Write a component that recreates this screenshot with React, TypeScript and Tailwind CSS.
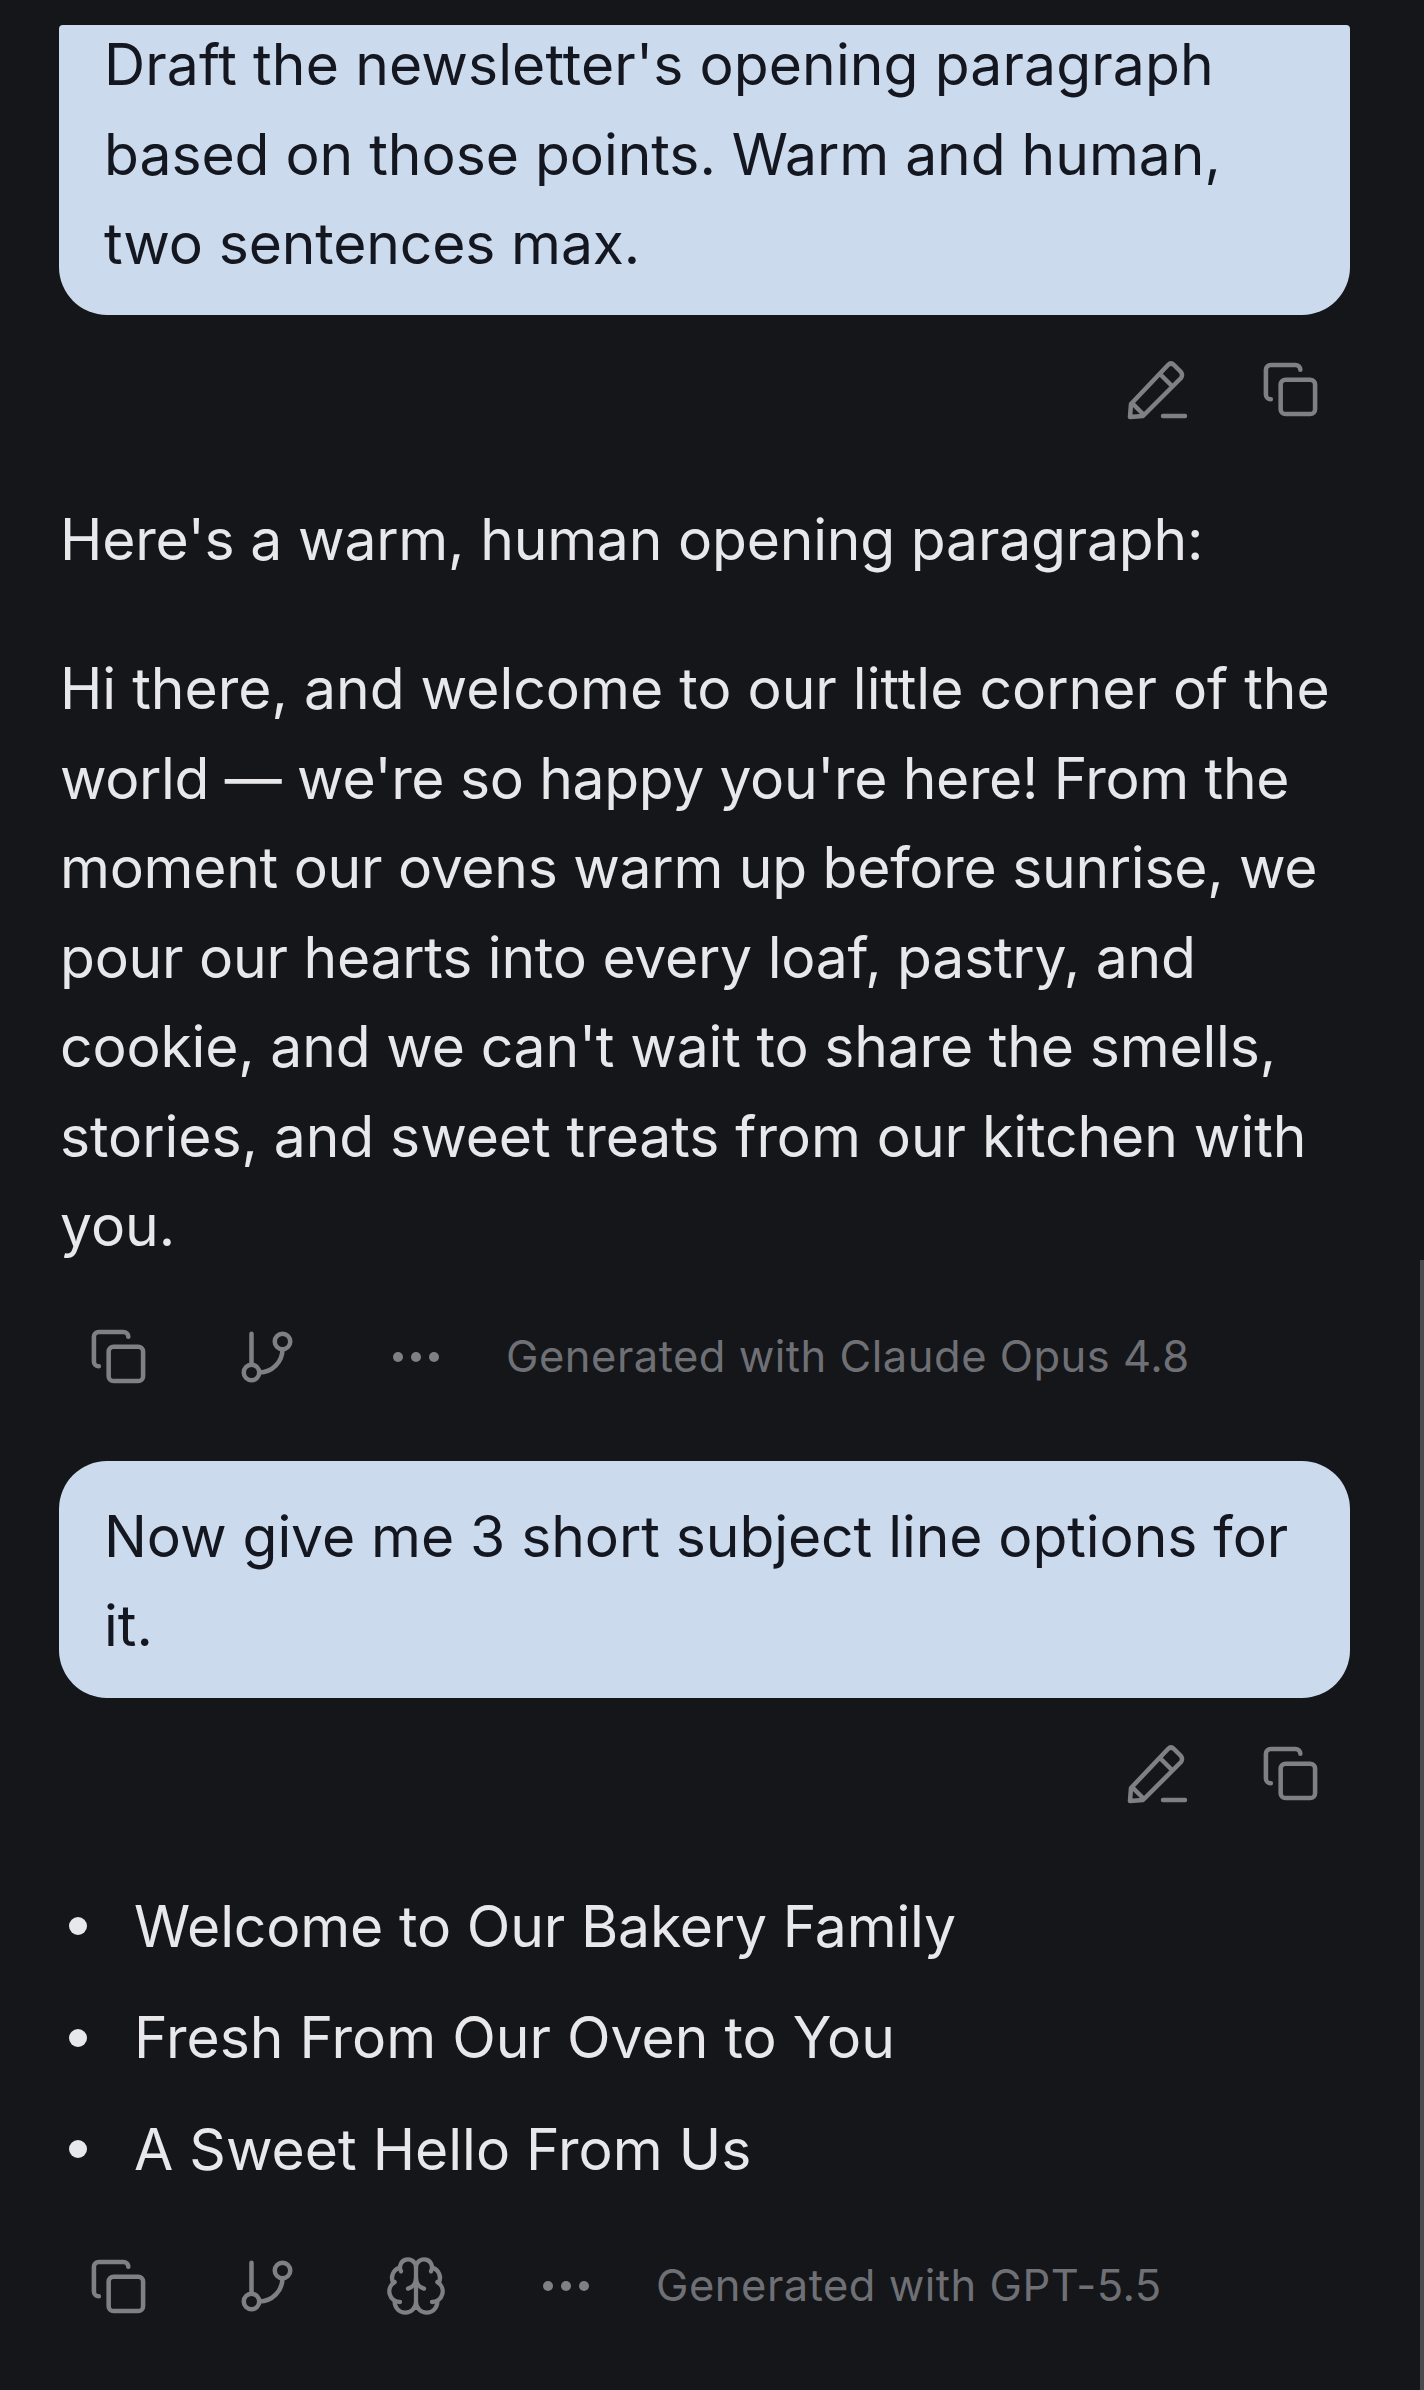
import { Brain, Copy, GitBranch } from "lucide-react";

type Line = { text: string; fit?: string };

function EditIcon() {
  return (
    <svg width="62" height="60" viewBox="0 0 62 60" fill="none" stroke="#7f8084" strokeWidth="4.5" strokeLinejoin="round" strokeLinecap="round">
      <path d="M3 57 L4 44 L41 5 Q44 2 47 5 L54 12 Q56 15 54 18 L16 56 Z" />
      <path d="M6 44 L16 54" />
      <path d="M33 14 L45 26" />
      <path d="M36 56 H58" />
    </svg>
  );
}

function CopyIcon() {
  return <Copy className="w-[59px] h-[59px] text-[#7f8084]" strokeWidth={1.85} />;
}

function TextLines({ lines }: { lines: Line[] }) {
  return (
    <>
      {lines.map((line) => (
        <div key={line.text} className={`h-[89.5px] leading-[89.5px] whitespace-nowrap ${line.fit ?? ""}`}>{line.text}</div>
      ))}
    </>
  );
}

function UserBubble({ lines, flat }: { lines: Line[]; flat?: boolean }) {
  return (
    <div className={flat ? "rounded-b-[48px] rounded-t-[4px] bg-[#cbdaed] px-[45px] pt-[1px] pb-[26px] text-[#14171f]" : "rounded-[48px] bg-[#cbdaed] px-[45px] pt-[31px] pb-[27px] text-[#14171f]"}>
      <div className={flat ? "-mt-[6px]" : ""}>
        <TextLines lines={lines} />
      </div>
    </div>
  );
}

function UserActions() {
  return (
    <div className="flex justify-end items-center gap-[72px] pr-[30px] h-[62px]">
      <EditIcon />
      <CopyIcon />
    </div>
  );
}

function ModelActions({ label, brain }: { label: string; brain?: boolean }) {
  return (
    <div className="flex items-center h-[60px] pl-[30px] text-[#7f8084]">
      <div className="w-[147px]"><CopyIcon /></div>
      <GitBranch className="w-[62px] h-[62px]" strokeWidth={1.75} />
      {brain && <Brain className="ml-[86px] w-[64px] h-[64px]" strokeWidth={1.6} />}
      <div className="ml-[95px] flex gap-[8px]">
        <span className="w-[10px] h-[10px] rounded-full bg-[#7f8084]" />
        <span className="w-[10px] h-[10px] rounded-full bg-[#7f8084]" />
        <span className="w-[10px] h-[10px] rounded-full bg-[#7f8084]" />
      </div>
      <span className="ml-[67px] text-[43.5px] tracking-[0.5px] text-[#6f7075]">{label}</span>
    </div>
  );
}

const paragraph: Line[] = [
  { text: "Hi there, and welcome to our little corner of the" },
  { text: "world — we're so happy you're here! From the", fit: "tracking-[-0.35px]" },
  { text: "moment our ovens warm up before sunrise, we", fit: "tracking-[-0.28px]" },
  { text: "pour our hearts into every loaf, pastry, and", fit: "tracking-[-0.24px]" },
  { text: "cookie, and we can't wait to share the smells,", fit: "tracking-[-0.17px]" },
  { text: "stories, and sweet treats from our kitchen with", fit: "tracking-[-0.06px]" },
  { text: "you." },
];

const bullets: Line[] = [
  { text: "Welcome to Our Bakery Family", fit: "tracking-[-0.16px]" },
  { text: "Fresh From Our Oven to You" },
  { text: "A Sweet Hello From Us" },
];

export default function App() {
  return (
    <div className="relative w-[1424px] h-[2390px] overflow-hidden bg-[#15161a] font-['Inter',sans-serif] text-[57px] text-[#e8e8ea]">
      <div className="absolute right-0 top-[1260px] bottom-0 w-[4px] bg-[#4a4b4f]" />
      <div className="pt-[25px] pl-[59px] pr-[74px]">
        <UserBubble
          flat
          lines={[
            { text: "Draft the newsletter's opening paragraph", fit: "tracking-[0.11px]" },
            { text: "based on those points. Warm and human,", fit: "tracking-[-0.04px]" },
            { text: "two sentences max.", fit: "tracking-[-0.15px]" },
          ]}
        />
        <div className="mt-[44px]"><UserActions /></div>

        <div className="mt-[74px] pl-[1px] leading-[89.5px] tracking-[-0.2px]">Here's a warm, human opening paragraph:</div>
        <div className="mt-[60px] pl-[1px]">
          <TextLines lines={paragraph} />
        </div>
        <div className="mt-[56px]"><ModelActions label="Generated with Claude Opus 4.8" /></div>

        <div className="mt-[74px]">
          <UserBubble lines={[{ text: "Now give me 3 short subject line options for", fit: "tracking-[-0.07px]" }, { text: "it." }]} />
        </div>
        <div className="mt-[45px]"><UserActions /></div>

        <ul className="mt-[66px]">
          {bullets.map((b) => (
            <li key={b.text} className="flex items-center h-[111.5px]">
              <span className="ml-[10px] w-[18px] h-[18px] rounded-full bg-[#e8e8ea]" />
              <span className={`ml-[47px] ${b.fit ?? ""}`}>{b.text}</span>
            </li>
          ))}
        </ul>
        <div className="mt-[51px]"><ModelActions brain label="Generated with GPT-5.5" /></div>
      </div>
    </div>
  );
}
